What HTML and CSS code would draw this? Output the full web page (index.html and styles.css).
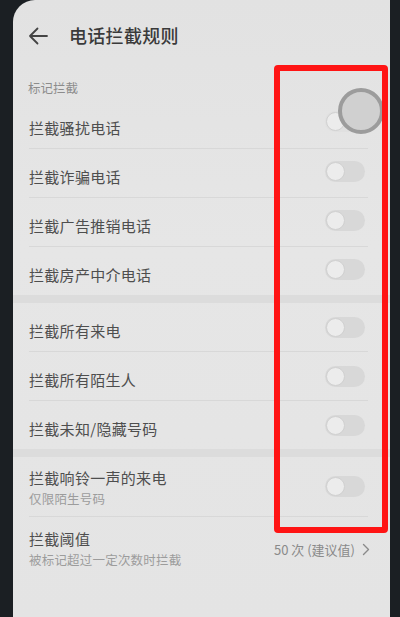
FILE: index.html
```html
<!DOCTYPE html>
<html lang="zh-CN">
<head>
<meta charset="utf-8">
<title>电话拦截规则</title>
<link rel="stylesheet" href="styles.css">
</head>
<body>
<div class="device">
  <div class="screen">
    <header class="header">
      <svg class="back" width="20" height="20" viewBox="0 0 20 20">
        <path d="M19 10H2M9.5 2.5L2 10l7.5 7.5" fill="none" stroke="#444" stroke-width="1.8" stroke-linecap="round" stroke-linejoin="round"/>
      </svg>
      <h1 class="title">电话拦截规则</h1>
    </header>

    <div class="section-title">标记拦截</div>
    <div class="group top">
      <div class="row"><span class="label">拦截骚扰电话</span><span class="toggle faint"></span></div>
      <div class="row"><span class="label">拦截诈骗电话</span><span class="toggle"></span></div>
      <div class="row"><span class="label">拦截广告推销电话</span><span class="toggle"></span></div>
      <div class="row last"><span class="label">拦截房产中介电话</span><span class="toggle"></span></div>
    </div>
    <div class="gap"></div>
    <div class="group">
      <div class="row"><span class="label">拦截所有来电</span><span class="toggle"></span></div>
      <div class="row"><span class="label">拦截所有陌生人</span><span class="toggle"></span></div>
      <div class="row last"><span class="label">拦截未知/隐藏号码</span><span class="toggle"></span></div>
    </div>
    <div class="gap"></div>
    <div class="group">
      <div class="row tall">
        <div class="texts"><span class="label">拦截响铃一声的来电</span><span class="sub">仅限陌生号码</span></div>
        <span class="toggle"></span>
      </div>
      <div class="row tall last">
        <div class="texts"><span class="label">拦截阈值</span><span class="sub">被标记超过一定次数时拦截</span></div>
        <span class="value">50 次 (建议值)
          <svg class="chev" width="8" height="13" viewBox="0 0 8 13"><path d="M1.5 1.5L6.5 6.5 1.5 11.5" fill="none" stroke="#8a8a8a" stroke-width="1.4" stroke-linecap="round" stroke-linejoin="round"/></svg>
        </span>
      </div>
    </div>
  </div>
  <div class="touch"></div>
  <div class="highlight"></div>
</div>
</body>
</html>
```

FILE: styles.css
```css
html, body {
  margin: 0;
  padding: 0;
}
body {
  width: 400px;
  height: 617px;
  overflow: hidden;
  background: #1b1f23;
  font-family: "Noto Sans CJK SC", "Noto Sans", sans-serif;
}
.device {
  position: relative;
  width: 400px;
  height: 617px;
  display: flex;
  padding-left: 13px;
  box-sizing: border-box;
}
.screen {
  width: 377px;
  height: 617px;
  background: linear-gradient(180deg, #e2e2e2 0%, #e6e6e6 40%, #e4e4e4 100%);
  border-top-left-radius: 22px;
  display: flex;
  flex-direction: column;
  overflow: hidden;
}
.header {
  height: 70px;
  flex: none;
  display: flex;
  align-items: center;
  padding-left: 15px;
  box-sizing: border-box;
}
.back {
  flex: none;
  margin-top: 1px;
}
.title {
  margin: 0 0 0 21px;
  font-size: 18px;
  font-weight: 500;
  color: #3a3a3a;
  letter-spacing: 0.3px;
}
.section-title {
  height: 30px;
  flex: none;
  padding: 4px 0 0 15px;
  box-sizing: border-box;
  display: flex;
  align-items: center;
  font-size: 12.5px;
  color: #8c8c8c;
}
.group {
  display: flex;
  flex-direction: column;
  flex: none;
}
.row {
  height: 49px;
  margin: 0 22px 0 16px;
  display: flex;
  align-items: center;
  justify-content: space-between;
  border-bottom: 1px solid #d8d8d8;
  box-sizing: border-box;
}
.row.last {
  border-bottom: none;
  height: 48px;
}
.row.tall {
  height: 60px;
}
.label {
  font-size: 15px;
  color: #4e4e4e;
  letter-spacing: 0.3px;
  margin-top: 6px;
}
.texts {
  display: flex;
  flex-direction: column;
  gap: 1px;
  margin-top: 2px;
}
.texts .label {
  margin-top: 0;
}
.sub {
  font-size: 12.5px;
  color: #9c9c9c;
  letter-spacing: 0.2px;
}
.gap {
  height: 8px;
  flex: none;
  background: #dcdcdc;
}
.toggle {
  position: relative;
  width: 40px;
  height: 21px;
  border-radius: 11px;
  background: #d8d8d8;
  margin-right: 3px;
  flex: none;
}
.group.top .toggle {
  margin-top: -4px;
}
.toggle::after {
  content: "";
  position: absolute;
  left: 1px;
  top: 1px;
  width: 17px;
  height: 17px;
  border-radius: 50%;
  background: #ececec;
  border: 1px solid #d0d0d0;
}
.group.top .toggle.faint {
  background: #e0e0e0;
  margin-top: -6px;
}
.value {
  display: flex;
  align-items: center;
  gap: 7px;
  font-size: 13px;
  color: #8a8a8a;
  margin-right: -2px;
  margin-top: 4px;
}
.touch {
  position: absolute;
  left: 338px;
  top: 88px;
  width: 38px;
  height: 38px;
  border-radius: 50%;
  border: 4px solid #9c9c9c;
  background: rgba(205, 205, 205, 0.85);
}
.highlight {
  position: absolute;
  left: 274px;
  top: 65px;
  width: 114px;
  height: 468px;
  box-sizing: border-box;
  border: 6px solid #ff1414;
  border-radius: 4px;
}
```
